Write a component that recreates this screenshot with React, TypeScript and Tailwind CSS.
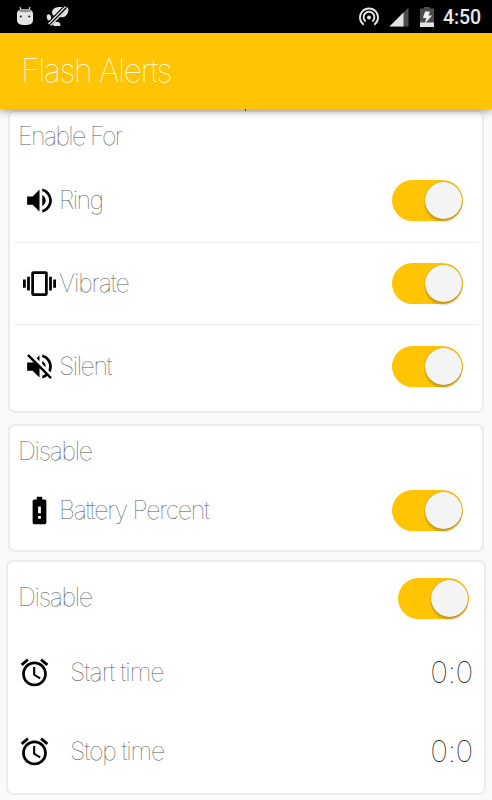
import React from "react";

const PATHS = {
  volumeUp:
    "M3 9v6h4l5 5V4L7 9H3zm13.5 3c0-1.77-1.02-3.29-2.5-4.03v8.05c1.48-.73 2.5-2.25 2.5-4.02zM14 3.23v2.06c2.89.86 5 3.54 5 6.71s-2.11 5.85-5 6.71v2.06c4.01-.91 7-4.49 7-8.77s-2.99-7.86-7-8.77z",
  vibration:
    "M0 15h2V9H0v6zm3 2h2V7H3v10zm19-8v6h2V9h-2zm-3 8h2V7h-2v10zM16.5 3h-9C6.67 3 6 3.67 6 4.5v15c0 .83.67 1.5 1.5 1.5h9c.83 0 1.5-.67 1.5-1.5v-15c0-.83-.67-1.5-1.5-1.5zM16 19H8V5h8v14z",
  volumeOff:
    "M16.5 12c0-1.77-1.02-3.29-2.5-4.03v2.21l2.45 2.45c.03-.2.05-.41.05-.63zm2.5 0c0 .94-.2 1.82-.54 2.64l1.51 1.51C20.63 14.91 21 13.5 21 12c0-4.28-2.99-7.86-7-8.77v2.06c2.89.86 5 3.54 5 6.71zM4.27 3L3 4.27 7.73 9H3v6h4l5 5v-6.73l4.25 4.25c-.67.52-1.42.93-2.25 1.18v2.06c1.38-.31 2.63-.95 3.69-1.81L19.73 21 21 19.73l-9-9L4.27 3zM12 4L9.91 6.09 12 8.18V4z",
  batteryAlert:
    "M15.67 4H14V2h-4v2H8.33C7.6 4 7 4.6 7 5.33v15.33C7 21.4 7.6 22 8.33 22h7.33c.74 0 1.34-.6 1.34-1.33V5.33C17 4.6 16.4 4 15.67 4zM13 18h-2v-2h2v2zm0-4h-2V9h2v5z",
  alarm:
    "M22 5.72l-4.6-3.86-1.29 1.53 4.6 3.86L22 5.72zM7.88 3.39L6.6 1.86 2 5.71l1.29 1.53 4.59-3.85zM12.5 8H11v6l4.75 2.85.75-1.23-4-2.37V8zM12 4c-4.97 0-9 4.03-9 9s4.02 9 9 9c4.97 0 9-4.03 9-9s-4.03-9-9-9zm0 16c-3.87 0-7-3.13-7-7s3.13-7 7-7 7 3.13 7 7-3.13 7-7 7z",
};

function Icon({ name }: { name: keyof typeof PATHS }) {
  return (
    <svg viewBox="0 0 24 24" className="size-[33px] shrink-0 fill-black">
      <path d={PATHS[name]} />
    </svg>
  );
}

function Toggle() {
  return (
    <div className="flex h-[41px] w-[71px] shrink-0 items-center justify-end rounded-full bg-[#ffc404] pr-px">
      <div className="size-[37px] rounded-full bg-[#f4f4f4] shadow-[0_3px_2px_rgba(0,0,0,0.18),0_0_1px_rgba(0,0,0,0.4)]" />
    </div>
  );
}

function Row({
  icon,
  label,
  className = "",
}: {
  icon: keyof typeof PATHS;
  label: string;
  className?: string;
}) {
  return (
    <div className="flex h-[82.500px] items-center pr-[15px] pl-[9px]">
      <Icon name={icon} />
      <span className={`ml-[3px] flex-1 pb-[1.500px] ${className}`}>{label}</span>
      <Toggle />
    </div>
  );
}

function StatusBar() {
  return (
    <div className="flex h-[33px] items-center bg-black pr-[11px] pl-4">
      <svg width="18" height="22" viewBox="0 0 18 22" className="mb-0.5 shrink-0">
        <path d="M4 2l1 3M14 2l-1 3" stroke="#e4e4e4" strokeWidth="1.1" />
        <path d="M1 9C1 5 4 4 9 4s8 1 8 5v6c0 4-3 5-8 5s-8-1-8-5z" fill="#e4e4e4" />
        <path d="M2.5 6.4Q4 4 9 4t6.500 2.400Q9 8 2.500 6.400z" fill="#929292" />
        <circle cx="4.800" cy="11.500" r="1.100" fill="#222" />
        <circle cx="13.200" cy="11.500" r="1.100" fill="#222" />
      </svg>
      <svg width="24" height="22" viewBox="0 0 24 22" className="mb-0.5 ml-3 shrink-0" fill="#e4e4e4">
        <ellipse cx="3" cy="12.500" rx="2.200" ry="3.300" transform="rotate(-12 3 12.500)" />
        <path d="M6 8C6 4 9 2 14 2h5c3 0 4 2 3 5-1 4-4 6-8 5-3-1-7 0-8-4z" />
        <path d="M6 20c1-3 3-4 5-3 3 0 4 2 3 4H9z" />
        <path d="M2.500 20L20 2" stroke="#000" strokeWidth="5" />
        <path d="M2.500 19L19.500 1.500M4.500 20.500L22 3" stroke="#e4e4e4" strokeWidth="1.300" />
      </svg>
      <div className="flex-1" />
      <svg width="20" height="20" viewBox="0 0 20 20" fill="none" stroke="#e4e4e4" strokeWidth="1.900" className="mt-px shrink-0">
        <path d="M4.800 17.800a9 9 0 1 1 10.400 0" />
        <path d="M6.600 14.400a5.400 5.400 0 1 1 6.800 0" />
        <circle cx="10" cy="10.500" r="2" fill="#e4e4e4" stroke="none" />
      </svg>
      <svg width="20" height="20" viewBox="0 0 20 20" className="ml-[10px] shrink-0">
        <path d="M0.500 19.500L19.500 0.500V19.500z" fill="#4c4c4c" />
        <path d="M0.500 19.500L14.500 5.500V19.500z" fill="#e4e4e4" />
      </svg>
      <svg width="14" height="20" viewBox="0 0 14 20" className="ml-[11px] shrink-0">
        <path d="M0 1.500h4V0h6v1.500h4V20H0z" fill="#4c4c4c" />
        <path d="M0 15.500h14V20H0z" fill="#e4e4e4" />
        <path d="M5 4.500h5L8.500 8.500H12L5 16.500l1.200-5.500H3z" fill="#f0f0f0" />
      </svg>
      <span className="mt-0.5 ml-[9px] font-['Roboto'] text-[19.500px] leading-none font-medium tracking-[-0.1px] text-[#e8e8e8]">
        4:50
      </span>
    </div>
  );
}

function TimeRow({ label, className = "" }: { label: string; className?: string }) {
  return (
    <div className="flex h-[79px] items-center pr-[11px] pl-[10px]">
      <Icon name="alarm" />
      <span className={`ml-[19px] flex-1 pb-px ${className}`}>{label}</span>
      <span className="pb-px text-[30px] tracking-[-0.300px] text-black">0:0</span>
    </div>
  );
}

export default function App() {
  return (
    <div className="flex h-[800px] w-[492px] flex-col overflow-hidden bg-[#fafafa] font-['Inter',sans-serif] text-[25px] leading-8 font-thin tracking-[-1.3px] text-[#555]">
      <StatusBar />
      <header className="z-10 flex h-[76px] shrink-0 items-center bg-[#ffc404] pb-px pl-[21px] text-[32px] tracking-[-1.300px] text-white shadow-[0_2px_8px_rgba(0,0,0,0.4)]">
        <h1>Flash Alerts</h1>
      </header>
      <div className="z-20 h-0 pl-[245px]">
        <div className="h-0.5 w-px bg-[#333]" />
      </div>
      <section className="mx-2 mt-px h-[303px] shrink-0 rounded-[7px] border-2 border-[#ececec] bg-white px-1">
        <h2 className="mt-2 pl-[4px] tracking-[-1.650px]">Enable For</h2>
        <div className="mt-2 divide-y divide-[#eeeeee]">
          <Row icon="volumeUp" label="Ring" className="tracking-[-1.600px]" />
          <Row icon="vibration" label="Vibrate" className="tracking-[-1.100px]" />
          <Row icon="volumeOff" label="Silent" className="tracking-[-1.500px]" />
        </div>
      </section>
      <section className="mx-2 mt-[11px] h-32 shrink-0 rounded-[7px] border-2 border-[#ececec] bg-white px-1">
        <h2 className="mt-[9px] pl-[4px]">Disable</h2>
        <div className="mt-0.5">
          <Row icon="batteryAlert" label="Battery Percent" />
        </div>
      </section>
      <section className="mx-1.5 mt-2 h-[235px] shrink-0 rounded-[7px] border-2 border-[#ececec] bg-white">
        <div className="flex h-[72px] items-center justify-between pr-[15px] pl-[10px]">
          <h2 className="pb-0.5">Disable</h2>
          <Toggle />
        </div>
        <div className="-mt-px">
          <TimeRow label="Start time" className="tracking-[-1px]" />
          <TimeRow label="Stop time" className="tracking-[-1.150px]" />
        </div>
      </section>
    </div>
  );
}
